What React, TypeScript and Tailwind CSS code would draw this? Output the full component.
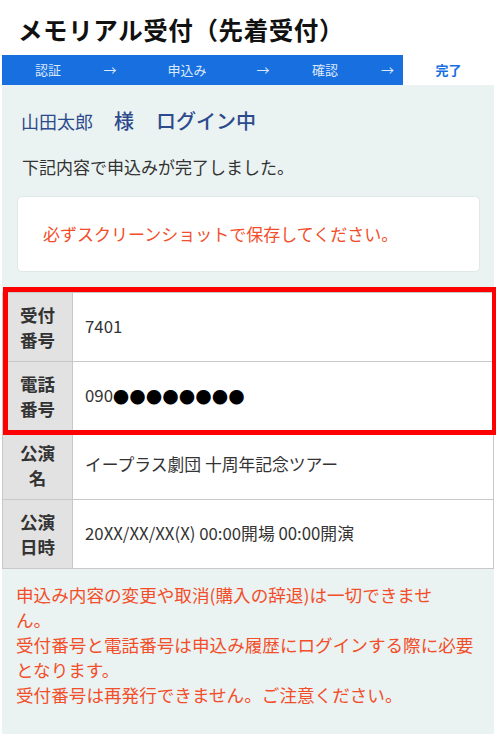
import React from "react";

const font = { fontFamily: '"Noto Sans CJK JP", "Noto Sans", sans-serif' };

function Row({ head, children }: { head: React.ReactNode; children: React.ReactNode }) {
  return (
    <div className="flex h-[69px] border-b border-[#c8c8c8]">
      <div className="w-[70px] shrink-0 bg-[#e2e2e2] border-r border-[#c8c8c8] flex items-center justify-center text-center text-[17.5px] leading-[25px] font-bold text-[#333]">
        {head}
      </div>
      <div className="flex-1 bg-white flex items-center pl-[12px] text-[16.8px] text-[#333]">{children}</div>
    </div>
  );
}

export default function App() {
  return (
    <div className="w-[496px] h-[734px] bg-white overflow-hidden" style={font}>
      <div className="h-[55px] pt-[5px] pl-[18px] flex items-center text-[24.5px] font-bold text-[#111] tracking-[0.6px]">
        メモリアル受付（先着受付）
      </div>
      <div className="mx-[2px] h-[30px] flex text-[13px]">
        <div className="w-[401px] bg-[#176fe0] flex text-[#dce9fb]">
          <div className="w-[92px] flex items-center justify-center">認証</div>
          <div className="w-[32px] flex items-center justify-center">→</div>
          <div className="w-[122px] flex items-center justify-center">申込み</div>
          <div className="w-[30px] flex items-center justify-center">→</div>
          <div className="w-[94px] flex items-center justify-center">確認</div>
          <div className="w-[31px] flex items-center justify-center">→</div>
        </div>
        <div className="flex-1 flex items-center justify-center font-bold text-[#176fe0]">完了</div>
      </div>
      <div className="mx-[2px] bg-[#eaf2f2] h-[649px] flex flex-col">
        <div className="pt-[22px] pl-[19px] flex items-center h-[50px] text-[#2d4a8c]">
          <span className="text-[18px]">山田太郎</span>
          <span className="text-[20px] font-medium ml-[21px]">様</span>
          <span className="text-[20px] font-medium ml-[22px]">ログイン中</span>
        </div>
        <div className="mt-[19px] pl-[20px] text-[17px] leading-[26px] text-[#333]">下記内容で申込みが完了しました。</div>
        <div className="mt-[16px] ml-[15px] mr-[14px] h-[76px] bg-white rounded-[5px] border border-[#e1e8e8] flex items-center pl-[25px] text-[17px] text-[#f24e2a]">
          必ずスクリーンショットで保存してください。
        </div>
        <div className="relative mt-[20px] border-t border-l border-r border-[#c8c8c8]">
          <Row head={<>受付<br />番号</>}>7401</Row>
          <Row head={<>電話<br />番号</>}>
            <span>090</span>
            <span className="text-[16px] text-black tracking-[0.5px]">●●●●●●●●</span>
          </Row>
          <Row head={<>公演<br />名</>}>イープラス劇団 十周年記念ツアー</Row>
          <Row head={<>公演<br />日時</>}>20XX/XX/XX(X) 00:00開場 00:00開演</Row>
          <div className="absolute top-[-6px] left-[0px] w-[494px] h-[148px] border-[5px] border-[#ff0000] pointer-events-none"></div>
        </div>
        <div className="pt-[13px] pl-[14px] text-[17.6px] leading-[25px] text-[#f24e2a]">
          申込み内容の変更や取消(購入の辞退)は一切できませ<br />
          ん。<br />
          受付番号と電話番号は申込み履歴にログインする際に必要<br />
          となります。<br />
          受付番号は再発行できません。ご注意ください。
        </div>
      </div>
    </div>
  );
}
